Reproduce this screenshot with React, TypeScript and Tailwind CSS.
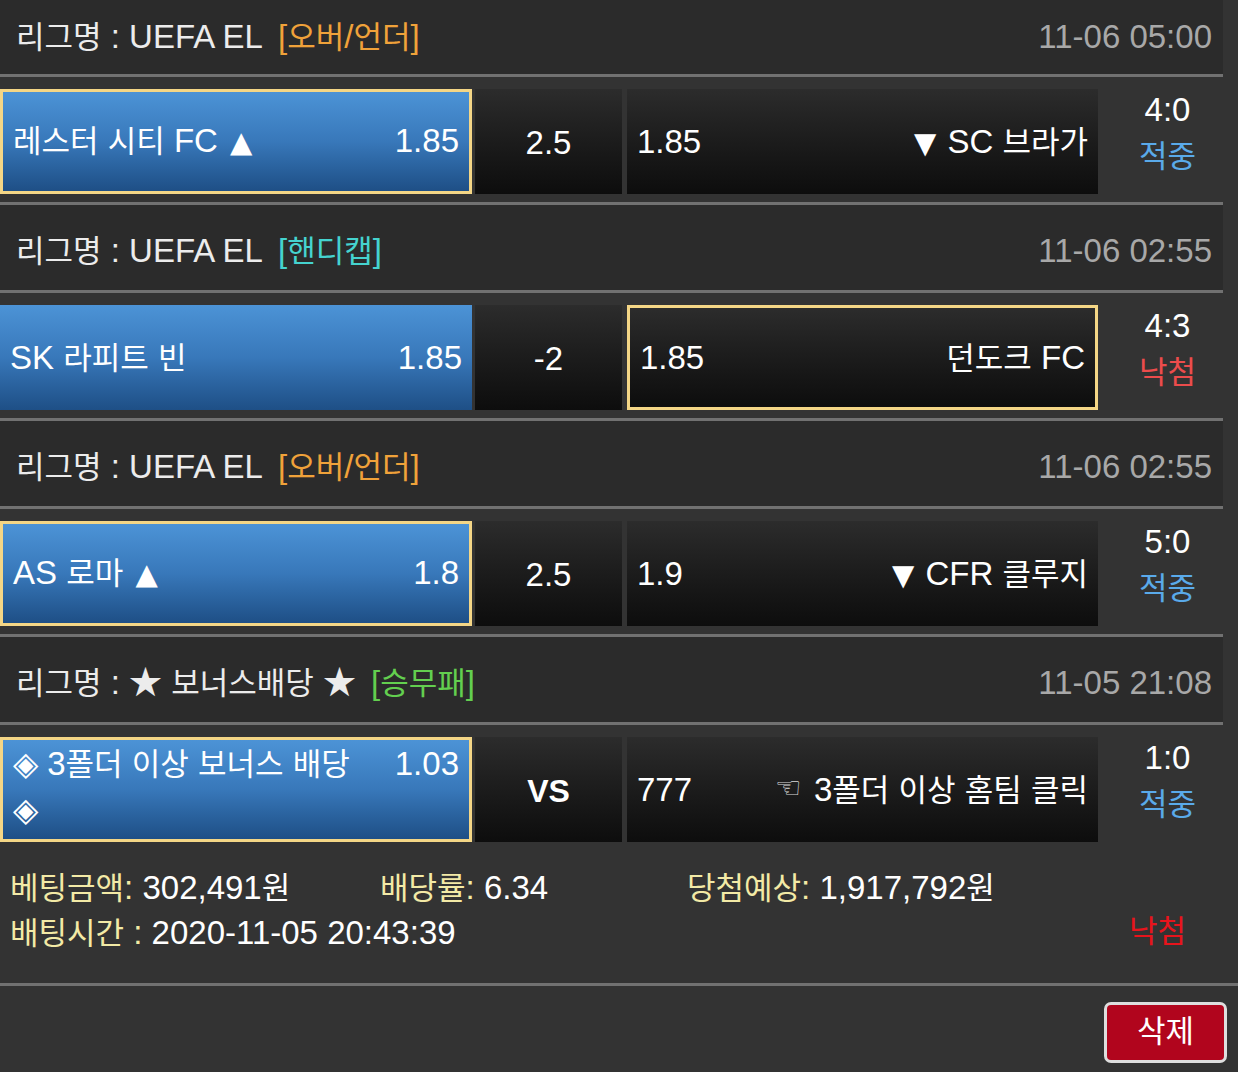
import React from "react";

function T({ s }: { s: string }) {
  const parts = s.split(/([\uAC00-\uD7A3]+|[▲▼])/);
  return (
    <>
      {parts.map((p, i) =>
        /[\uAC00-\uD7A3]/.test(p) ? (
          <span key={i} className="text-[31px]">
            {p}
          </span>
        ) : p === "▲" ? (
          <span key={i} className="ml-[3px] font-['DejaVu_Sans',sans-serif] text-[29px]">
            {p}
          </span>
        ) : p === "▼" ? (
          <span key={i} className="mr-[2px] font-['DejaVu_Sans',sans-serif] text-[29px]">
            {p}
          </span>
        ) : (
          <React.Fragment key={i}>{p}</React.Fragment>
        )
      )}
    </>
  );
}

type Match = {
  tag: string;
  tagClass: string;
  league: string;
  time: string;
  home: React.ReactNode;
  homeOdds: string;
  mid: string;
  midBold?: boolean;
  awayOdds: string;
  away: React.ReactNode;
  score: string;
  result: string;
  resultClass: string;
  selected: "home" | "away";
  first?: boolean;
  last?: boolean;
  wrap?: boolean;
};

const matches: Match[] = [
  {
    first: true,
    league: "리그명 : UEFA EL",
    tag: "[오버/언더]",
    tagClass: "text-[#f0a23a]",
    time: "11-06 05:00",
    home: <T s="레스터 시티 FC ▲" />,
    homeOdds: "1.85",
    mid: "2.5",
    awayOdds: "1.85",
    away: <T s="▼ SC 브라가" />,
    score: "4:0",
    result: "적중",
    resultClass: "text-[#5aaaea]",
    selected: "home",
  },
  {
    league: "리그명 : UEFA EL",
    tag: "[핸디캡]",
    tagClass: "text-[#45d3cf]",
    time: "11-06 02:55",
    home: <T s="SK 라피트 빈" />,
    homeOdds: "1.85",
    mid: "-2",
    awayOdds: "1.85",
    away: <T s="던도크 FC" />,
    score: "4:3",
    result: "낙첨",
    resultClass: "text-[#ec4c4c]",
    selected: "away",
  },
  {
    league: "리그명 : UEFA EL",
    tag: "[오버/언더]",
    tagClass: "text-[#f0a23a]",
    time: "11-06 02:55",
    home: <T s="AS 로마 ▲" />,
    homeOdds: "1.8",
    mid: "2.5",
    awayOdds: "1.9",
    away: <T s="▼ CFR 클루지" />,
    score: "5:0",
    result: "적중",
    resultClass: "text-[#5aaaea]",
    selected: "home",
  },
  {
    last: true,
    wrap: true,
    league: "리그명 : ★ 보너스배당 ★",
    tag: "[승무패]",
    tagClass: "text-[#63cf4f]",
    time: "11-05 21:08",
    home: (
      <>
        <T s="◈ 3폴더 이상 보너스 배당" />
        <br />
        ◈
      </>
    ),
    homeOdds: "1.03",
    mid: "VS",
    midBold: true,
    awayOdds: "777",
    away: (
      <>
        <span className="mr-[12px] inline-block align-[3px] font-['DejaVu_Sans',sans-serif] text-[30px] leading-none text-[#d8d8d8]">
          ☜
        </span>
        <T s="3폴더 이상 홈팀 클릭" />
      </>
    ),
    score: "1:0",
    result: "적중",
    resultClass: "text-[#5aaaea]",
    selected: "home",
  },
];

const blue = "bg-gradient-to-b from-[#4c93d6] via-[#3878ba] to-[#1e4f86]";
const dark = "bg-gradient-to-b from-[#2c2c2c] to-[#0d0d0d]";
const sel = "border-[3px] border-[#f4d686]";

function Block({ m }: { m: Match }) {
  return (
    <div className="w-[1223px]">
      <div
        className={`${m.first ? "h-[74px]" : "h-[85px] pt-[7px]"} flex items-center justify-between bg-[#2b2b2b] pl-[16px] pr-[11px]`}
      >
        <div className="text-[#ececec]">
          <T s={m.league} />
          <span className={`ml-[15px] ${m.tagClass}`}>
            <T s={m.tag} />
          </span>
        </div>
        <div className="text-[#a8a8a8]">{m.time}</div>
      </div>
      <div className="h-[3px] bg-[#717171]" />
      <div className="flex h-[125px] pt-[12px]">
        <div
          className={`flex h-[105px] w-[472px] px-[10px] ${m.wrap ? "items-start pt-[1px]" : "items-center"} ${blue} ${m.selected === "home" ? sel : ""}`}
        >
          <div className="w-full leading-[45px] text-white">
            <span className="float-right">{m.homeOdds}</span>
            {m.home}
          </div>
        </div>
        <div
          className={`ml-[3px] flex h-[105px] w-[147px] items-center justify-center pt-[3px] text-white ${dark} ${m.midBold ? "text-[32px] font-bold" : ""}`}
        >
          {m.mid}
        </div>
        <div
          className={`ml-[5px] flex h-[105px] w-[471px] items-center justify-between px-[10px] text-white ${dark} ${m.selected === "away" ? sel : ""}`}
        >
          <span>{m.awayOdds}</span>
          <span>{m.away}</span>
        </div>
        <div className="-mt-[3px] flex flex-1 flex-col items-center pl-[14px]">
          <div className="h-[47px] leading-[47px] text-white">{m.score}</div>
          <div className={`h-[47px] text-[31px] leading-[47px] ${m.resultClass}`}>{m.result}</div>
        </div>
      </div>
      {!m.last && <div className="h-[3px] bg-[#717171]" />}
    </div>
  );
}

export default function App() {
  return (
    <div className="h-[1072px] w-[1238px] overflow-hidden bg-[#333333] font-['Liberation_Sans','Noto_Sans_CJK_KR',sans-serif] text-[33px]">
      {matches.map((m, i) => (
        <Block key={i} m={m} />
      ))}
      <div className="h-[133px] pl-[10px] pt-[15px] text-white">
        <div className="flex h-[45px] items-center">
          <div className="w-[370px]">
            <span className="text-[#f3eaa6]">
              <T s="베팅금액:" />
            </span>{" "}
            <T s="302,491원" />
          </div>
          <div className="w-[307px]">
            <span className="text-[#f3eaa6]">
              <T s="배당률:" />
            </span>{" "}
            6.34
          </div>
          <div>
            <span className="text-[#f3eaa6]">
              <T s="당첨예상:" />
            </span>{" "}
            <T s="1,917,792원" />
          </div>
        </div>
        <div className="flex h-[45px] items-center justify-between pr-[52px]">
          <div>
            <span className="text-[#f3eaa6]">
              <T s="배팅시간 :" />
            </span>{" "}
            2020-11-05 20:43:39
          </div>
          <div className="text-[31px] text-[#e8141c]">낙첨</div>
        </div>
      </div>
      <div className="h-[3px] bg-[#717171]" />
      <div className="flex justify-end pr-[11px] pt-[16px]">
        <button className="flex h-[61px] w-[123px] items-center justify-center rounded-[7px] border-[3px] border-[#dedede] bg-[#b1051d] text-[31px] text-white">
          삭제
        </button>
      </div>
    </div>
  );
}
